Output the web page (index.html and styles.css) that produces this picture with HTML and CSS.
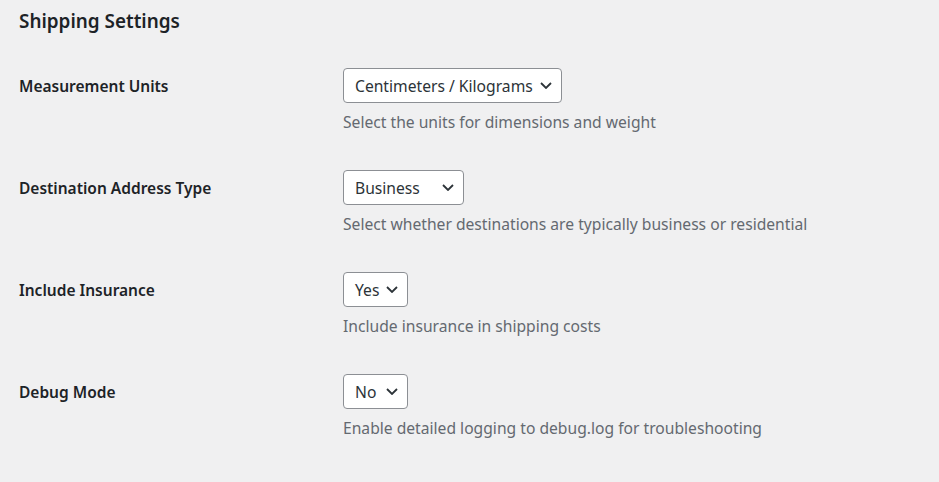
FILE: index.html
```html
<!DOCTYPE html>
<html lang="en">
<head>
<meta charset="utf-8">
<title>Shipping Settings</title>
<link rel="stylesheet" href="styles.css">
</head>
<body>
<div class="wrap">
  <h2 class="title">Shipping Settings</h2>
  <div class="form">
    <div class="row">
      <div class="label">Measurement Units</div>
      <div class="field">
        <div class="select w-units"><span>Centimeters / Kilograms</span><svg class="chev" viewBox="0 0 12 7"><path d="M1 1l5 5 5-5"/></svg></div>
        <p class="desc">Select the units for dimensions and weight</p>
      </div>
    </div>
    <div class="row">
      <div class="label">Destination Address Type</div>
      <div class="field">
        <div class="select w-type"><span>Business</span><svg class="chev" viewBox="0 0 12 7"><path d="M1 1l5 5 5-5"/></svg></div>
        <p class="desc">Select whether destinations are typically business or residential</p>
      </div>
    </div>
    <div class="row">
      <div class="label">Include Insurance</div>
      <div class="field">
        <div class="select w-yn"><span>Yes</span><svg class="chev" viewBox="0 0 12 7"><path d="M1 1l5 5 5-5"/></svg></div>
        <p class="desc">Include insurance in shipping costs</p>
      </div>
    </div>
    <div class="row">
      <div class="label">Debug Mode</div>
      <div class="field">
        <div class="select w-yn"><span>No</span><svg class="chev" viewBox="0 0 12 7"><path d="M1 1l5 5 5-5"/></svg></div>
        <p class="desc">Enable detailed logging to debug.log for troubleshooting</p>
      </div>
    </div>
  </div>
</div>
</body>
</html>
```

FILE: styles.css
```css
html, body {
  margin: 0;
  padding: 0;
  background: #f0f0f1;
}
body {
  font-family: "Noto Sans", "Open Sans", sans-serif;
  color: #1d2327;
  font-size: 15.65px;
}
.wrap {
  padding: 9px 0 0 19px;
}
.title {
  margin: 0;
  font-size: 18.9px;
  line-height: 24px;
  font-weight: 600;
}
.form {
  margin-top: 20px;
}
.row {
  display: grid;
  grid-template-columns: 324px 1fr;
  height: 102px;
  padding-top: 15px;
  box-sizing: border-box;
}
.label {
  font-weight: 600;
  font-size: 15.5px;
  line-height: 20px;
  padding-top: 8px;
}
.field {
  display: flex;
  flex-direction: column;
  align-items: flex-start;
}
.select {
  display: flex;
  align-items: center;
  justify-content: space-between;
  box-sizing: border-box;
  height: 35px;
  padding: 0 9px 0 11px;
  background: #fff;
  border: 1px solid #8c8f94;
  border-radius: 4px;
  font-size: 15.65px;
  color: #2c3338;
}
.w-units { width: 219px; }
.w-type { width: 121px; }
.w-yn { width: 65px; }
.chev {
  width: 12px;
  height: 7px;
  fill: none;
  stroke: #2c3338;
  stroke-width: 1.8;
}
.desc {
  margin: 9px 0 0;
  font-size: 15.65px;
  line-height: 20px;
  color: #646970;
}
```
